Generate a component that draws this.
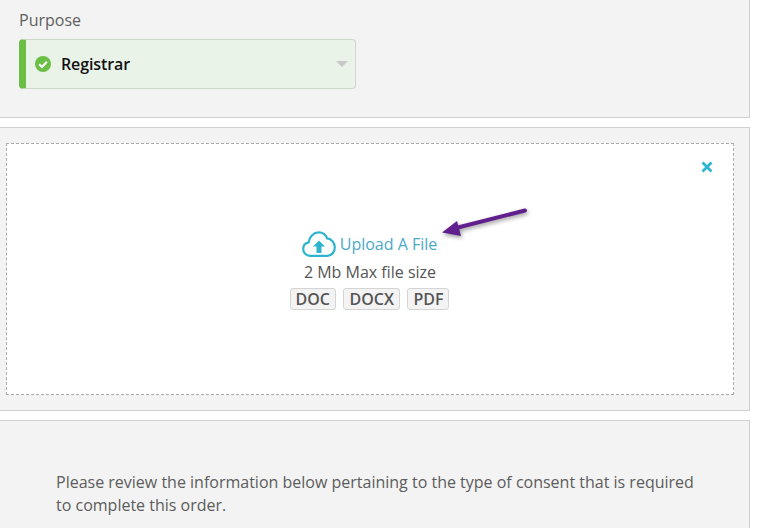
<style>
:global(body) { margin: 0; background: #fff; }
.page { width: 760px; height: 528px; overflow: hidden; font-family: "Open Sans", sans-serif; color: #555; box-sizing: border-box; }
.panel { width: 750px; margin-bottom: 9px; background: #f3f3f3; border: 1px solid #d0d0d0; border-left: 0; box-sizing: border-box; }
.purpose { height: 118px; border-top: 0; padding: 9px 0 0 19px; }
.label { font-size: 16px; line-height: 22px; color: #5f5f5f; margin-bottom: 8px; }
.select { width: 337px; height: 50px; box-sizing: border-box; border: 1px solid #cfd6cd; border-left: 7px solid #6cbf45; border-radius: 4px; background: #eaf3e7; display: flex; align-items: center; padding: 0 3px 0 9px; }
.select svg { margin-right: 10px; }
.name { font-size: 16px; font-weight: 600; letter-spacing: -0.1px; color: #111; flex: 1; }
.caret { width: 0; height: 0; margin-right: 4px; border: 6px solid transparent; border-top: 6px solid #c9c9c9; border-bottom: 0; }
.upload { height: 284px; padding: 15px 15px 15px 6px; position: relative; }
.drop { height: 252px; box-sizing: border-box; background: #fff; border: 1px dashed #aaa; position: relative; display: flex; flex-direction: column; align-items: center; padding-top: 86px; }
.close { position: absolute; top: 17px; right: 20px; }
.link { display: flex; align-items: center; gap: 4px; font-size: 16px; line-height: 28px; color: #4ba9c8; height: 28px; margin-left: -1px; }
.size { font-size: 16px; line-height: 28px; color: #555; height: 30px; }
.tags { display: flex; gap: 7.5px; margin-left: -1px; }
.tag { border: 1px solid #d4d4d4; border-radius: 3px; background: #f3f3f3; font-size: 16px; font-weight: 600; line-height: 20px; padding: 0 5px; color: #555; }
.arrow { position: absolute; left: 440px; top: 77px; filter: drop-shadow(1px 2px 2px rgba(0,0,0,.4)); }
.consent { height: 120px; padding: 50px 50px 0 56px; font-size: 16px; line-height: 23px; color: #5c5c5c; margin: 0; border-bottom: 0; }
.consent p { margin: 0; }
</style>

<div class="page">
  <section class="panel purpose">
    <div class="label">Purpose</div>
    <div class="select">
      <svg width="16" height="16" viewBox="0 0 16 16"><circle cx="8" cy="8" r="8" fill="#6cbf45"/><path d="M4.200 8.200 7 11l4.900-5.200" fill="none" stroke="#fff" stroke-width="2.200"/></svg>
      <span class="name">Registrar</span>
      <span class="caret"></span>
    </div>
  </section>
  <section class="panel upload">
    <div class="drop">
      <svg class="close" width="12" height="12" viewBox="0 0 12 12"><path d="M1.500 1.500 10.500 10.500M10.500 1.500 1.500 10.500" stroke="#2fb4d0" stroke-width="2.800"/></svg>
      <div class="link">
        <svg width="34" height="26" viewBox="0 0 34 26"><path d="M8 24.800C4 24.800 1.200 21.800 1.200 18 1.200 14.600 3.500 12 6.600 11.400 7.400 5.500 11.600 1.400 16.800 1.400 20.800 1.400 23.800 3.800 25.200 7.400 29.600 8 32.800 11.800 32.800 16.200 32.800 21 29.600 24.800 25.400 24.800Z" fill="none" stroke="#2fb4d0" stroke-width="2.200"/><path d="M17 9.500 23 15.500H19.500V22H14.500V15.500H11Z" fill="#2fb4d0"/></svg>
        <span>Upload A File</span>
      </div>
      <div class="size">2 Mb Max file size</div>
      <div class="tags"><span class="tag">DOC</span><span class="tag">DOCX</span><span class="tag">PDF</span></div>
    </div>
    <svg class="arrow" width="92" height="40" viewBox="0 0 92 40"><path d="M85 5.500 14 23.500" stroke="#5f1f8c" stroke-width="4" stroke-linecap="round"/><path d="M2 27.500 17 16 21 31Z" fill="#5f1f8c"/></svg>
  </section>
  <section class="panel consent">
    <p>Please review the information below pertaining to the type of consent that is required to complete this order.</p>
  </section>
</div>
